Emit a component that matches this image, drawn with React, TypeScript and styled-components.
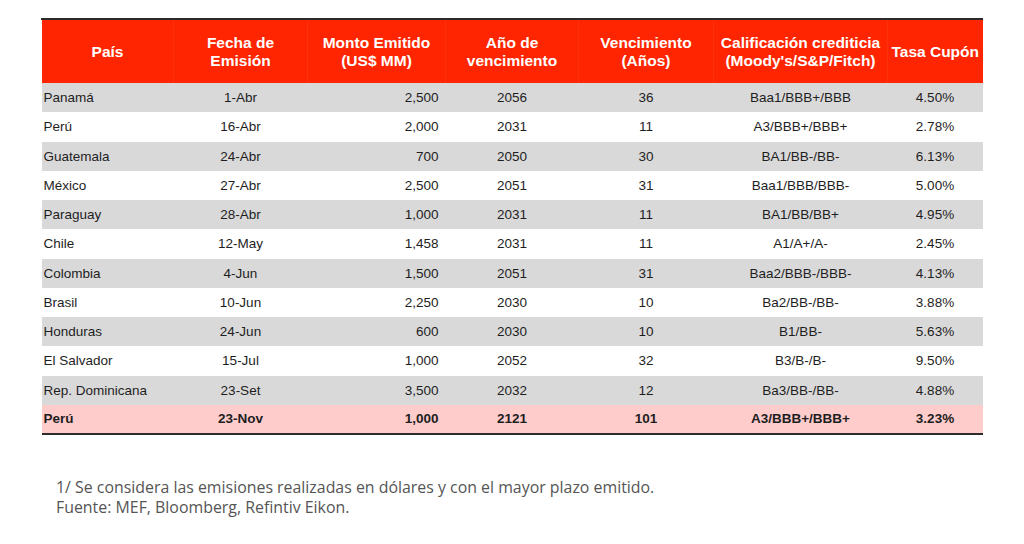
import styled, { createGlobalStyle } from "styled-components";

const GlobalStyle = createGlobalStyle`
    body {
        margin: 0;
        background: #ffffff;
        font-family: "Liberation Sans", Arial, sans-serif;
    }
`;

const Page = styled.div`
    width: 1024px;
    height: 544px;
    padding: 18px 0 0 41px;
    box-sizing: border-box;
`;

const Table = styled.table`
    width: 941px;
    border-collapse: collapse;
    table-layout: fixed;
    border-top: 2px solid #2b2b2b;
    border-bottom: 2px solid #2b2b2b;
`;

const HeadRow = styled.tr`
    background-color: #fe2500;
    height: 64px;
`;

const HeadCell = styled.th`
    color: #ffffff;
    font-size: 15.5px;
    font-weight: bold;
    line-height: 18px;
    text-align: center;
    vertical-align: middle;
    padding: 0;
    white-space: nowrap;
    border-left: 1px solid rgba(255, 255, 255, 0.06);
`;

const Row = styled.tr<{ $tone: "gray" | "white" | "pink" }>`
    height: 29.25px;
    background-color: ${(p) =>
        p.$tone === "gray" ? "#d9d9d9" : p.$tone === "pink" ? "#ffcccc" : "#ffffff"};
    font-weight: ${(p) => (p.$tone === "pink" ? "bold" : "normal")};
`;

const Cell = styled.td<{ $align?: "left" | "center" | "right" }>`
    font-size: 13.5px;
    color: #1e1e1e;
    text-align: ${(p) => p.$align || "center"};
    padding: 0 ${(p) => (p.$align === "right" ? "7px" : p.$align === "left" ? "2px" : "0")};
    vertical-align: middle;
    white-space: nowrap;
`;

const Notes = styled.div`
    margin-top: 42px;
    margin-left: 15px;
    font-family: "Open Sans", sans-serif;
    font-size: 15.9px;
    line-height: 20px;
    color: #555555;
`;

const columns = [132, 134, 138, 133, 135, 174, 95];

const rows = [
    ["Panamá", "1-Abr", "2,500", "2056", "36", "Baa1/BBB+/BBB", "4.50%"],
    ["Perú", "16-Abr", "2,000", "2031", "11", "A3/BBB+/BBB+", "2.78%"],
    ["Guatemala", "24-Abr", "700", "2050", "30", "BA1/BB-/BB-", "6.13%"],
    ["México", "27-Abr", "2,500", "2051", "31", "Baa1/BBB/BBB-", "5.00%"],
    ["Paraguay", "28-Abr", "1,000", "2031", "11", "BA1/BB/BB+", "4.95%"],
    ["Chile", "12-May", "1,458", "2031", "11", "A1/A+/A-", "2.45%"],
    ["Colombia", "4-Jun", "1,500", "2051", "31", "Baa2/BBB-/BBB-", "4.13%"],
    ["Brasil", "10-Jun", "2,250", "2030", "10", "Ba2/BB-/BB-", "3.88%"],
    ["Honduras", "24-Jun", "600", "2030", "10", "B1/BB-", "5.63%"],
    ["El Salvador", "15-Jul", "1,000", "2052", "32", "B3/B-/B-", "9.50%"],
    ["Rep. Dominicana", "23-Set", "3,500", "2032", "12", "Ba3/BB-/BB-", "4.88%"],
    ["Perú", "23-Nov", "1,000", "2121", "101", "A3/BBB+/BBB+", "3.23%"],
];

function App() {
    return (
        <Page>
            <GlobalStyle />
            <Table>
                <colgroup>
                    {columns.map((w, i) => (
                        <col key={i} style={{ width: w }} />
                    ))}
                </colgroup>
                <thead>
                    <HeadRow>
                        <HeadCell>País</HeadCell>
                        <HeadCell>Fecha de<br />Emisión</HeadCell>
                        <HeadCell>Monto Emitido<br />(US$ MM)</HeadCell>
                        <HeadCell>Año de<br />vencimiento</HeadCell>
                        <HeadCell>Vencimiento<br />(Años)</HeadCell>
                        <HeadCell>Calificación crediticia<br />(Moody's/S&amp;P/Fitch)</HeadCell>
                        <HeadCell>Tasa Cupón</HeadCell>
                    </HeadRow>
                </thead>
                <tbody>
                    {rows.map((r, i) => (
                        <Row key={i} $tone={i === rows.length - 1 ? "pink" : i % 2 === 0 ? "gray" : "white"}>
                            <Cell $align="left">{r[0]}</Cell>
                            <Cell>{r[1]}</Cell>
                            <Cell $align="right">{r[2]}</Cell>
                            <Cell>{r[3]}</Cell>
                            <Cell>{r[4]}</Cell>
                            <Cell>{r[5]}</Cell>
                            <Cell>{r[6]}</Cell>
                        </Row>
                    ))}
                </tbody>
            </Table>
            <Notes>
                1/ Se considera las emisiones realizadas en dólares y con el mayor plazo emitido.
                <br />
                Fuente: MEF, Bloomberg, Refintiv Eikon.
            </Notes>
        </Page>
    );
}

export default App;
